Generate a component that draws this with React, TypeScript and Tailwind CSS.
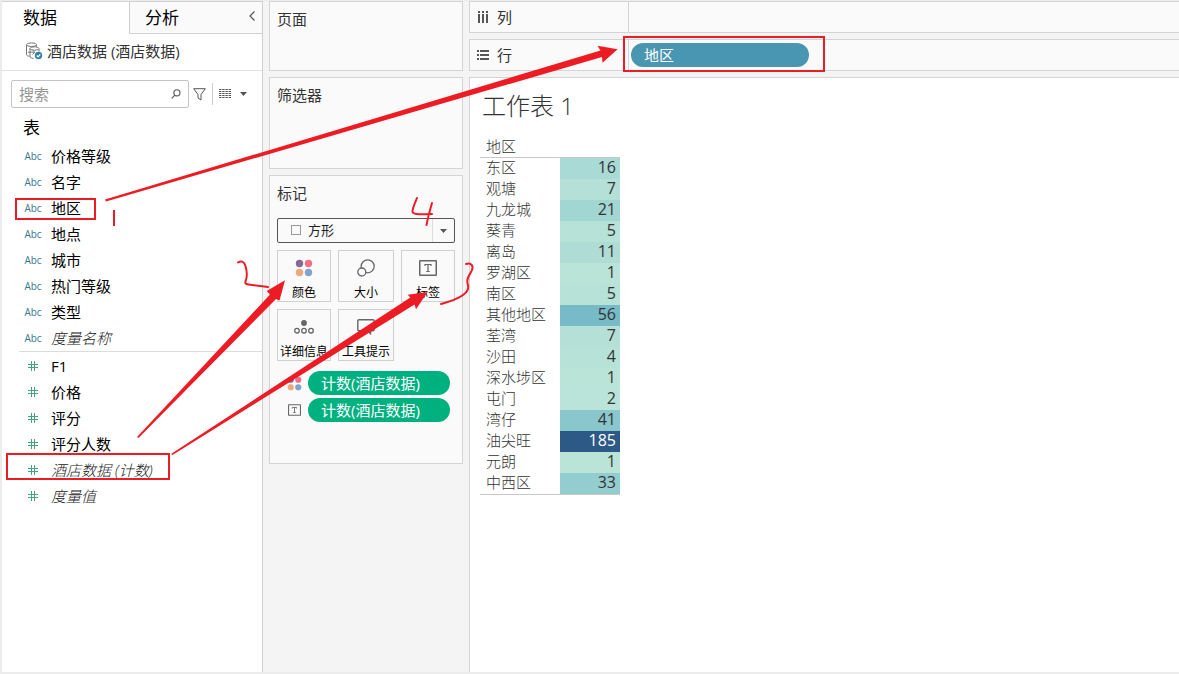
import type { ReactNode } from 'react';

const DIMENSIONS = [
  { name: '价格等级' },
  { name: '名字' },
  { name: '地区' },
  { name: '地点' },
  { name: '城市' },
  { name: '热门等级' },
  { name: '类型' },
  { name: '度量名称', generated: true },
];

const MEASURES = [
  { name: 'F1' },
  { name: '价格' },
  { name: '评分' },
  { name: '评分人数' },
  { name: '酒店数据 (计数)', generated: true },
  { name: '度量值', generated: true },
];

const ROWS = [
  { area: '东区', count: 16, color: 'bg-[#a9dad6]' },
  { area: '观塘', count: 7, color: 'bg-[#b4e0d8]' },
  { area: '九龙城', count: 21, color: 'bg-[#a2d6d3]' },
  { area: '葵青', count: 5, color: 'bg-[#b6e2d8]' },
  { area: '离岛', count: 11, color: 'bg-[#afddd6]' },
  { area: '罗湖区', count: 1, color: 'bg-[#bbe4d9]' },
  { area: '南区', count: 5, color: 'bg-[#b6e2d8]' },
  { area: '其他地区', count: 56, color: 'bg-[#77bbc8]' },
  { area: '荃湾', count: 7, color: 'bg-[#b4e0d8]' },
  { area: '沙田', count: 4, color: 'bg-[#b7e2d8]' },
  { area: '深水埗区', count: 1, color: 'bg-[#bbe4d9]' },
  { area: '屯门', count: 2, color: 'bg-[#bae4d9]' },
  { area: '湾仔', count: 41, color: 'bg-[#89c7cd]' },
  { area: '油尖旺', count: 185, color: 'bg-[#2c5985] text-white' },
  { area: '元朗', count: 1, color: 'bg-[#bbe4d9]' },
  { area: '中西区', count: 33, color: 'bg-[#94cdd0]' },
];

function Caret() {
  return (
    <svg className="h-1 w-[7px]" viewBox="0 0 7 4" fill="#555">
      <path d="M0 0h7L3.5 4z" />
    </svg>
  );
}

function ColorDots({ className }: { className: string }) {
  return (
    <svg className={className} viewBox="0 0 18 18">
      <circle cx="4.5" cy="4.5" r="3.7" fill="#826b98" />
      <circle cx="13.5" cy="4.5" r="3.7" fill="#f76f85" />
      <circle cx="4.5" cy="13.5" r="3.7" fill="#f1a77c" />
      <circle cx="13.5" cy="13.5" r="3.7" fill="#80a4cc" />
    </svg>
  );
}

function LabelIcon({ className }: { className: string }) {
  return (
    <svg className={className} viewBox="0 0 18 16" fill="none" stroke="#666">
      <rect x="0.75" y="0.75" width="16.5" height="14.5" rx="0.5" strokeWidth="1.5" />
      <path d="M6 6V4.5h6V6M9 4.5v7M7.3 11.5h3.4" strokeWidth="1.2" />
    </svg>
  );
}

function DataSourceIcon() {
  return (
    <svg className="h-[18px] w-[18px]" viewBox="0 0 18 18" fill="none" stroke="#777">
      <path d="M1.5 3v9.5c0 1 1.5 1.6 3 1.8" />
      <ellipse cx="6.5" cy="2.7" rx="5" ry="1.8" />
      <path d="M11.5 3v1.5" />
      <path d="M5 6.5v8.5c.7.9 2 1.3 3.5 1.4M14 7v2.5" />
      <ellipse cx="9.5" cy="6.5" rx="4.5" ry="1.7" />
      <path d="M3 10.2h6.5M7.5 8l2.3 2.2-2.3 2.3" />
      <circle cx="13.5" cy="13.5" r="3.7" fill="#36819f" stroke="none" />
      <path d="M11.7 13.5l1.4 1.3 2.2-2.5" stroke="#fff" strokeWidth="1.2" />
    </svg>
  );
}

function HashIcon() {
  return (
    <svg className="h-[10px] w-[10px]" viewBox="0 0 10 10" fill="none" stroke="#43a47f">
      <path d="M3.5 0v10M6.5 0v10M0 3.5h10M0 6.5h10" />
    </svg>
  );
}

function Field({ name, generated, icon }: { name: string; generated?: boolean; icon: ReactNode }) {
  return (
    <li>
      <button type="button" className="flex h-[26px] w-full items-center gap-2 pl-1 text-left">
        <span className="flex w-5 justify-center text-[10px] font-medium text-[#36788f]">{icon}</span>
        <span className={generated ? 'font-light text-[#222] italic' : 'text-black'}>{name}</span>
      </button>
    </li>
  );
}

function DataPane() {
  return (
    <aside className="w-[261px] shrink-0 border-r border-[#d0d0d0] bg-white">
      <div className="flex h-[33px] text-[17px] text-black" role="tablist">
        <button type="button" role="tab" aria-selected="true" className="w-[127px] border-t border-[#d4d4d4] pl-[21px] text-left">
          数据
        </button>
        <div className="flex flex-1 border-t border-b border-l border-[#d0d0d0] bg-[#fafafa]">
          <button type="button" role="tab" aria-selected="false" className="flex-1 pl-[15px] text-left">
            分析
          </button>
          <button type="button" aria-label="折叠" className="pr-[7px] pb-1">
            <svg className="h-[10px] w-[6px]" viewBox="0 0 6 10" fill="none" stroke="#555" strokeWidth="1.2">
              <path d="M5.5.5L1 5l4.5 4.5" />
            </svg>
          </button>
        </div>
      </div>

      <div className="flex h-[37px] items-center gap-1 border-b border-[#e0e0e0] pb-[2px] pl-[23px] text-[#333]">
        <DataSourceIcon />
        <span>酒店数据 (酒店数据)</span>
      </div>

      <div className="flex items-center pt-[9px] pr-[15px] pl-[9px]">
        <label className="flex h-7 w-[178px] items-center rounded-xs border border-[#c4c4c4] px-[7px]">
          <input type="text" aria-label="搜索" placeholder="搜索" className="w-full min-w-0 flex-1 outline-none placeholder:text-[#959595]" />
          <svg className="h-[10px] w-[10px] shrink-0" viewBox="0 0 11 11" fill="none" stroke="#555" strokeWidth="1.2">
            <circle cx="6.5" cy="4.2" r="3.4" />
            <path d="M4.2 6.7L.8 10.2" />
          </svg>
        </label>
        <button type="button" aria-label="筛选" className="ml-1">
          <svg className="h-[13px] w-[13px]" viewBox="0 0 13 13" fill="none" stroke="#555">
            <path d="M.7.7h11.6L8 6.5v5.5L5 10V6.5z" />
          </svg>
        </button>
        <button type="button" aria-label="视图" className="ml-[6px] flex h-[22px] flex-1 items-center justify-between border-l border-[#ccc] pl-[6px]">
          <svg className="h-[10px] w-3" viewBox="0 0 12 10" stroke="#555">
            <path d="M0 .5h12M0 2.5h12M0 4.5h12M0 6.5h12M0 8.5h12" strokeDasharray="2.4 .8" />
          </svg>
          <Caret />
        </button>
      </div>

      <h2 className="pt-2 pb-[3px] pl-[21px] text-[17px] leading-6 text-black">表</h2>
      <ul className="ml-[17px] border-b border-[#dcdcdc]">
        {DIMENSIONS.map((f) => (
          <Field key={f.name} {...f} icon="Abc" />
        ))}
      </ul>
      <ul className="ml-[17px] pt-px">
        {MEASURES.map((f) => (
          <Field key={f.name} {...f} icon={<HashIcon />} />
        ))}
      </ul>
    </aside>
  );
}

function Card({ title, className, children }: { title: string; className: string; children?: ReactNode }) {
  return (
    <section className={`border border-[#d4d4d4] bg-[#fafafa] px-[7px] pt-[7px] ${className}`}>
      <h2 className="leading-5">{title}</h2>
      {children}
    </section>
  );
}

function MarkButton({ label, children }: { label: string; children: ReactNode }) {
  return (
    <button type="button" className="flex h-[52px] flex-col items-center justify-between border border-[#d0d0d0] pt-[7px] text-[12px] leading-4 whitespace-nowrap text-black">
      <span className="flex h-5 items-center">{children}</span>
      {label}
    </button>
  );
}

function MarkPill({ icon }: { icon: ReactNode }) {
  return (
    <div className="flex items-center pr-[5px]">
      <span className="flex w-[31px] justify-center pl-1">{icon}</span>
      <button type="button" className="h-6 flex-1 rounded-full bg-[#00b180] pl-[13px] text-left leading-6 text-white">
        计数(酒店数据)
      </button>
    </div>
  );
}

function MarksCards() {
  return (
    <div className="flex w-[206px] shrink-0 flex-col gap-[6px] px-[6px]">
      <Card title="页面" className="min-h-[70px]" />
      <Card title="筛选器" className="min-h-[92px]" />
      <Card title="标记" className="min-h-[289px]">
        <div className="relative mt-[15px]">
          <select aria-label="标记类型" className="h-[25px] w-full appearance-none rounded-xs border border-[#555] bg-[#fafafa] pl-[30px] text-[13px] text-[#222]">
            <option>方形</option>
          </select>
          <span className="pointer-events-none absolute top-[7px] left-[14px] h-[10px] w-[10px] border border-[#999]" />
          <span className="pointer-events-none absolute inset-y-px right-px flex w-[22px] items-center justify-center border-l border-[#ddd]">
            <Caret />
          </span>
        </div>

        <div className="mt-[7px] grid grid-cols-[54px_1fr_54px] gap-[7px]">
          <MarkButton label="颜色">
            <ColorDots className="h-[18px] w-[18px]" />
          </MarkButton>
          <MarkButton label="大小">
            <svg className="h-[18px] w-[18px]" viewBox="0 0 18 18" stroke="#666" strokeWidth="1.3">
              <circle cx="10.7" cy="7.3" r="6.5" fill="none" />
              <circle cx="4.8" cy="13" r="4" fill="#fafafa" />
            </svg>
          </MarkButton>
          <MarkButton label="标签">
            <LabelIcon className="h-4 w-[18px]" />
          </MarkButton>
          <MarkButton label="详细信息">
            <svg className="h-[14px] w-5" viewBox="0 0 20 14" fill="none" stroke="#666" strokeWidth="1.3">
              <circle cx="10" cy="3" r="2.9" fill="#666" stroke="none" />
              <circle cx="3" cy="10.7" r="2.3" />
              <circle cx="10" cy="10.7" r="2.3" />
              <circle cx="17" cy="10.7" r="2.3" />
            </svg>
          </MarkButton>
          <MarkButton label="工具提示">
            <svg className="h-4 w-[18px]" viewBox="0 0 18 16" fill="none" stroke="#666" strokeWidth="1.4">
              <path d="M2 .8h14q1.2 0 1.2 1.2v8.5q0 1.2-1.2 1.2h-2.5v3l-3-3H2q-1.2 0-1.2-1.2V2Q.8.8 2 .8z" />
            </svg>
          </MarkButton>
        </div>

        <div className="mt-[10px] flex flex-col gap-[3px]">
          <MarkPill icon={<ColorDots className="h-[15px] w-[15px]" />} />
          <MarkPill icon={<LabelIcon className="h-3 w-[13px]" />} />
        </div>
      </Card>
    </div>
  );
}

function Shelf({ label, icon, children }: { label: string; icon: ReactNode; children?: ReactNode }) {
  return (
    <div className="mb-[6px] flex h-8 border-y border-l border-[#d4d4d4] bg-[#fafafa]">
      <div className="flex w-[159px] items-center gap-2 border-r border-[#d4d4d4] pl-[7px]">
        {icon}
        <span>{label}</span>
      </div>
      <div className="flex flex-1 items-center pl-[2px]">{children}</div>
    </div>
  );
}

function Worksheet() {
  return (
    <main className="flex min-w-0 flex-1 flex-col">
      <Shelf
        label="列"
        icon={
          <svg className="h-3 w-3" viewBox="0 0 12 12" fill="#555">
            <path d="M1 0h2v2H1zM5 0h2v2H5zM9 0h2v2H9zM1 3h2v9H1zM5 3h2v9H5zM9 3h2v9H9z" />
          </svg>
        }
      />
      <Shelf
        label="行"
        icon={
          <svg className="h-3 w-3" viewBox="0 0 12 12" fill="#555">
            <path d="M0 1h2v2H0zM0 5h2v2H0zM0 9h2v2H0zM3 1h9v2H3zM3 5h9v2H3zM3 9h9v2H3z" />
          </svg>
        }
      >
        <button type="button" className="h-6 w-[178px] rounded-full bg-[#4996b2] pl-[13px] text-left leading-6 text-white">
          地区
        </button>
      </Shelf>

      <div className="flex-1 border-t border-l border-[#d4d4d4] bg-white px-[10px] pt-3">
        <h1 className="pl-[2px] text-2xl leading-8 font-light">工作表 1</h1>
        <table className="mt-[14px] border-b border-[#c8c8c8] leading-[19px]">
          <thead>
            <tr className="h-[21px] border-b border-[#c8c8c8]">
              <th colSpan={2} scope="col" className="p-0 pl-[6px] text-left font-light">
                地区
              </th>
            </tr>
          </thead>
          <tbody>
            {ROWS.map((row) => (
              <tr key={row.area} className="h-[21px]">
                <th scope="row" className="w-20 p-0 pb-[2px] pl-[6px] text-left font-light">
                  {row.area}
                </th>
                <td className={`w-[60px] p-0 pr-1 pb-[2px] text-right text-base leading-[19px] ${row.color}`}>
                  {row.count}
                </td>
              </tr>
            ))}
          </tbody>
        </table>
      </div>
    </main>
  );
}

// Hand-drawn steps on top of the workspace
function Annotations() {
  return (
    <svg className="h-full w-full" fill="none" stroke="#ed1c24" strokeWidth="2" strokeLinecap="round">
      <g strokeLinecap="butt">
        <rect x="16" y="199" width="79" height="20" />
        <rect x="7" y="454" width="162" height="25" />
        <rect x="624" y="37" width="200" height="34" />
      </g>
      <g fill="#ed1c24" stroke="none">
        <path d="M105 199.5L600.5 50.5 597.5 45.8 617.6 49.3 602.5 62.7 602 57 106 201.5z" />
        <path d="M137 437L270 294.5 266.7 291 285 280.3 279.5 300.5 276 299 138.5 438z" />
        <path d="M171 454L410.3 297.5 407.7 294.7 427.7 292 416 309.3 414.5 304.5 172.5 455z" />
      </g>
      <path d="M114 210v16" strokeLinecap="butt" />
      <path d="M238 262.5C241 260.5 244 261 245.5 266C247.5 273 247 278 245.5 281.5C244.5 284 247 284.5 252 285L268 287" />
      <path d="M466 264C470 262.5 474 265 472 270C470 275 466 278 467.5 283C469 288 468.5 291 463 295C458 299 450 301.5 441 304" />
      <path d="M417 198C415 203 413 207 412.5 211C412 214.5 418 214.5 432 214M432 203C430 210 428 217 426.5 225" />
    </svg>
  );
}

export default function App() {
  return (
    <div className="relative flex min-h-screen border-t border-b-2 border-l-2 border-[#ececec] bg-[#f4f4f4] font-['Open_Sans','Noto_Sans_CJK_SC',sans-serif] text-[15px] text-[#333]">
      <DataPane />
      <MarksCards />
      <Worksheet />
      <div className="pointer-events-none absolute -top-px right-0 -bottom-[2px] -left-[2px]">
        <Annotations />
      </div>
    </div>
  );
}
